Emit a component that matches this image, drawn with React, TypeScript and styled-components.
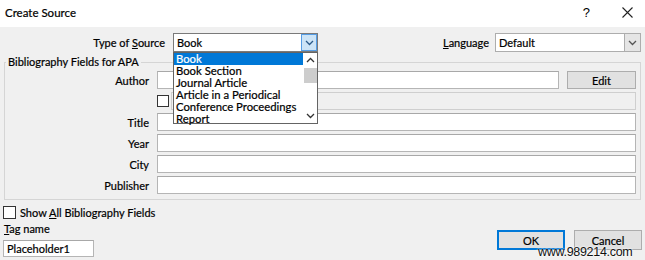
import React from "react";
import styled, { createGlobalStyle } from "styled-components";

const Global = createGlobalStyle`
  html, body { margin: 0; padding: 0; background: #f0f0f0; }
  body {
    font-family: Lato, "Noto Sans", sans-serif;
    font-size: 11px;
    color: #000;
    -webkit-text-stroke: 0.2px currentColor;
  }
  * { box-sizing: border-box; }
`;

const Window = styled.div`
  position: relative;
  width: 645px;
  height: 260px;
  overflow: hidden;
  background: #f0f0f0;
  display: flex;
  flex-direction: column;
`;

const TitleBar = styled.div`
  height: 27px;
  flex: none;
  background: #fff;
  display: flex;
  align-items: center;
  padding: 0 12px 0 5px;
`;

const TitleText = styled.div`
  flex: 1;
  font-size: 11.5px;
  margin-top: -2px;
`;

const TitleButtons = styled.div`
  display: flex;
  align-items: center;
  gap: 32px;
  margin-top: -2px;
`;

const Help = styled.span`
  font-size: 13px;
  font-family: "Liberation Sans", sans-serif;
  -webkit-text-stroke: 0;
`;

const TopRow = styled.div`
  display: flex;
  align-items: center;
  height: 19px;
  margin-top: 6px;
  padding-right: 4px;
`;

const Label = styled.label<{ $w?: number }>`
  ${(p) => (p.$w ? `width: ${p.$w}px;` : "")}
  text-align: right;
  white-space: nowrap;
  flex: none;
`;

const ComboWrap = styled.div<{ $w: number; $ml: number }>`
  position: relative;
  width: ${(p) => p.$w}px;
  margin-left: ${(p) => p.$ml}px;
  height: 19px;
  flex: none;
`;

const Combo = styled.div<{ $active?: boolean }>`
  height: 19px;
  display: flex;
  background: #fff;
  border: 1px solid ${(p) => (p.$active ? "#7a7a7a" : "#adadad")};
`;

const ComboText = styled.div`
  flex: 1;
  padding-left: 3px;
  line-height: 17px;
`;

const ComboBtn = styled.div<{ $active?: boolean }>`
  width: 16px;
  display: flex;
  align-items: center;
  justify-content: center;
  background: ${(p) => (p.$active ? "#cce4f7" : "#e5e5e5")};
  border-left: 1px solid ${(p) => (p.$active ? "#569de5" : "#adadad")};
  ${(p) => (p.$active ? "outline: 1px solid #569de5; outline-offset: -1px;" : "")}
`;

const Spacer = styled.div`
  flex: 1;
`;

const DropList = styled.div`
  position: absolute;
  top: 19px;
  left: 0;
  width: 145px;
  height: 72px;
  background: #fff;
  border: 1px solid #646464;
  display: flex;
  z-index: 5;
`;

const Items = styled.div`
  flex: 1;
`;

const Item = styled.div<{ $sel?: boolean }>`
  height: 12px;
  line-height: 12px;
  padding-left: 2px;
  white-space: nowrap;
  font-size: 11.3px;
  background: ${(p) => (p.$sel ? "#0078d7" : "transparent")};
  color: ${(p) => (p.$sel ? "#fff" : "#000")};
`;

const ScrollBar = styled.div`
  width: 14px;
  display: flex;
  flex-direction: column;
  align-items: center;
  background: #fff;
`;

const ScrollArrow = styled.div`
  height: 14px;
  width: 14px;
  display: flex;
  align-items: center;
  justify-content: center;
`;

const Thumb = styled.div`
  margin-top: 1px;
  width: 13px;
  height: 15px;
  background: #cdcdcd;
`;

const Group = styled.fieldset`
  margin: 3px 4px 0 4px;
  padding: 2px 4px 5px 0;
  border: 1px solid #d5d5d5;
  min-width: 0;
`;

const Legend = styled.legend`
  padding: 0 2px;
  margin-left: 1px;
  line-height: 14px;
`;

const FieldGrid = styled.div`
  display: grid;
  grid-template-columns: 144px 1fr;
  column-gap: 8px;
  row-gap: 3px;
  align-items: center;
`;

const RowLabel = styled.div`
  text-align: right;
`;

const Input = styled.div`
  height: 18px;
  background: #fff;
  border: 1px solid #b5b5b5;
  border-top-color: #a8a8a8;
  padding-left: 3px;
  line-height: 16px;
`;

const AuthorRow = styled.div`
  display: flex;
  gap: 8px;
  align-items: center;
`;

const GrowInput = styled(Input)`
  flex: 1;
`;

const Button = styled.div<{ $primary?: boolean; $w: number; $h: number }>`
  width: ${(p) => p.$w}px;
  height: ${(p) => p.$h}px;
  flex: none;
  display: flex;
  align-items: center;
  justify-content: center;
  background: #e1e1e1;
  border: 1px solid ${(p) => (p.$primary ? "#0078d7" : "#adadad")};
  ${(p) => (p.$primary ? "box-shadow: inset 0 0 0 1px #0078d7;" : "")}
`;

const CheckRow = styled.div`
  display: flex;
  align-items: center;
  gap: 2px;
`;

const Check = styled.div`
  width: 12px;
  height: 12px;
  background: #fff;
  border: 1px solid #333;
  flex: none;
`;

const DisabledField = styled.div`
  flex: 1;
  height: 18px;
  background: #f0f0f0;
  border: 1px solid #cfcfcf;
`;

const Footer = styled.div`
  flex: 1;
  display: flex;
  padding: 6px 3px 0 3px;
`;

const FooterLeft = styled.div`
  display: flex;
  flex-direction: column;
`;

const ShowAll = styled.div`
  display: flex;
  align-items: center;
  gap: 4px;
  height: 13px;
`;

const BigCheck = styled(Check)`
  width: 13px;
  height: 13px;
`;

const TagLabel = styled.div`
  margin-top: 3px;
  padding-left: 1px;
  line-height: 14px;
`;

const TagInput = styled(Input)`
  margin-top: 4px;
  width: 91px;
  height: 17px;
`;

const Buttons = styled.div`
  margin-left: auto;
  display: flex;
  gap: 9px;
  align-self: flex-end;
  margin-bottom: 10px;
`;

const Watermark = styled.div`
  position: absolute;
  left: 538px;
  top: 245px;
  font-family: "Liberation Sans", Arial, sans-serif;
  font-size: 12.5px;
  letter-spacing: -0.3px;
  color: #111;
  -webkit-text-stroke: 0;
  text-shadow: 0 0 2px #fff, 0 0 2px #fff;
  z-index: 10;
`;

const Chevron = ({ up, color = "#333" }: { up?: boolean; color?: string }) => (
  <svg width="9" height="6" viewBox="0 0 9 6">
    <path
      d={up ? "M1 5 L4.5 1.5 L8 5" : "M1 1 L4.5 4.5 L8 1"}
      fill="none"
      stroke={color}
      strokeWidth="1.3"
    />
  </svg>
);

const CloseIcon = () => (
  <svg width="11" height="11" viewBox="0 0 11 11">
    <path d="M0.5 0.5 L10.5 10.5 M10.5 0.5 L0.5 10.5" stroke="#222" strokeWidth="1.1" />
  </svg>
);

const sources = [
  "Book",
  "Book Section",
  "Journal Article",
  "Article in a Periodical",
  "Conference Proceedings",
  "Report",
];

export default function App() {
  return (
    <>
      <Global />
      <Window>
        <TitleBar>
          <TitleText>Create Source</TitleText>
          <TitleButtons>
            <Help>?</Help>
            <CloseIcon />
          </TitleButtons>
        </TitleBar>

        <TopRow>
          <Label $w={165}>
            Type of <u>S</u>ource
          </Label>
          <ComboWrap $w={145} $ml={8}>
            <Combo $active>
              <ComboText>Book</ComboText>
              <ComboBtn $active>
                <Chevron color="#2b5a8a" />
              </ComboBtn>
            </Combo>
            <DropList>
              <Items>
                {sources.map((s, i) => (
                  <Item key={s} $sel={i === 0}>
                    {s}
                  </Item>
                ))}
              </Items>
              <ScrollBar>
                <ScrollArrow>
                  <Chevron up />
                </ScrollArrow>
                <Thumb />
                <Spacer />
                <ScrollArrow>
                  <Chevron />
                </ScrollArrow>
              </ScrollBar>
            </DropList>
          </ComboWrap>
          <Spacer />
          <Label>
            <u>L</u>anguage
          </Label>
          <ComboWrap $w={146} $ml={6}>
            <Combo>
              <ComboText>Default</ComboText>
              <ComboBtn>
                <Chevron color="#555" />
              </ComboBtn>
            </Combo>
          </ComboWrap>
        </TopRow>

        <Group>
          <Legend>Bibliography Fields for APA</Legend>
          <FieldGrid>
            <RowLabel>Author</RowLabel>
            <AuthorRow>
              <GrowInput />
              <Button $w={69} $h={18}>Edit</Button>
            </AuthorRow>
            <div />
            <CheckRow>
              <Check />
              <DisabledField />
            </CheckRow>
            <RowLabel>Title</RowLabel>
            <Input />
            <RowLabel>Year</RowLabel>
            <Input />
            <RowLabel>City</RowLabel>
            <Input />
            <RowLabel>Publisher</RowLabel>
            <Input />
          </FieldGrid>
        </Group>

        <Footer>
          <FooterLeft>
            <ShowAll>
              <BigCheck />
              <span>
                Show <u>A</u>ll Bibliography Fields
              </span>
            </ShowAll>
            <TagLabel>
              <u>T</u>ag name
            </TagLabel>
            <TagInput>Placeholder1</TagInput>
          </FooterLeft>
          <Buttons>
            <Button $primary $w={68} $h={20}>OK</Button>
            <Button $w={68} $h={20}>Cancel</Button>
          </Buttons>
        </Footer>
        <Watermark>www.989214.com</Watermark>
      </Window>
    </>
  );
}
